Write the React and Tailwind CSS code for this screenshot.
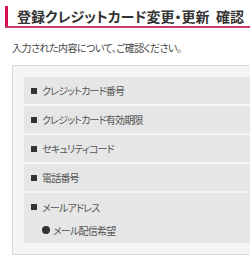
import React from 'react';

const items = [
  'クレジットカード番号',
  'クレジットカード有効期限',
  'セキュリティコード',
  '電話番号',
];

function Bullet() {
  return <span className="inline-block w-[6px] h-[6px] bg-[#333] mr-[5px] shrink-0" />;
}

export default function App() {
  return (
    <div
      className="w-[250px] h-[261px] overflow-hidden bg-white text-[#444]"
      style={{ fontFamily: '"Noto Sans CJK JP", "Noto Sans", sans-serif', fontFeatureSettings: '"palt"' }}
    >
      <div className="pt-[6px] pl-[5px]">
        <div className="flex border-b-2 border-[#c8386a] w-[300px]">
          <div className="w-[3px] h-[20px] bg-[#d6104f]" />
          <h1 className="pl-[9px] text-[14px] font-bold leading-[20px] text-[#333] whitespace-nowrap">
            登録クレジットカード変更・更新&nbsp;&nbsp;確認
          </h1>
        </div>
      </div>

      <p className="mt-[12px] pl-[12px] text-[10px] tracking-[-0.5px] leading-[16px] text-[#444] whitespace-nowrap">
        入力された内容について、ご確認ください。
      </p>

      <div className="mt-[9px] ml-[12px] w-[400px] border border-[#d8d8d8] rounded-[2px] bg-[#f5f5f5] px-[11px] py-[11px]">
        <div className="flex flex-col gap-[2px] text-[10px] tracking-[-0.8px] text-[#555]">
          {items.map((t) => (
            <div key={t} className="h-[27px] bg-[#e6e6e6] flex items-center pl-[7px] whitespace-nowrap">
              <Bullet />
              {t}
            </div>
          ))}
          <div className="h-[50px] bg-[#e6e6e6] pl-[7px] pt-[6px] whitespace-nowrap">
            <div className="flex items-center h-[16px]">
              <Bullet />
              メールアドレス
            </div>
            <div className="flex items-center h-[16px] mt-[7px] pl-[11px]">
              <span className="inline-block w-[8px] h-[8px] rounded-full bg-[#333] mr-[3px]" />
              メール配信希望
            </div>
          </div>
        </div>
      </div>
    </div>
  );
}
